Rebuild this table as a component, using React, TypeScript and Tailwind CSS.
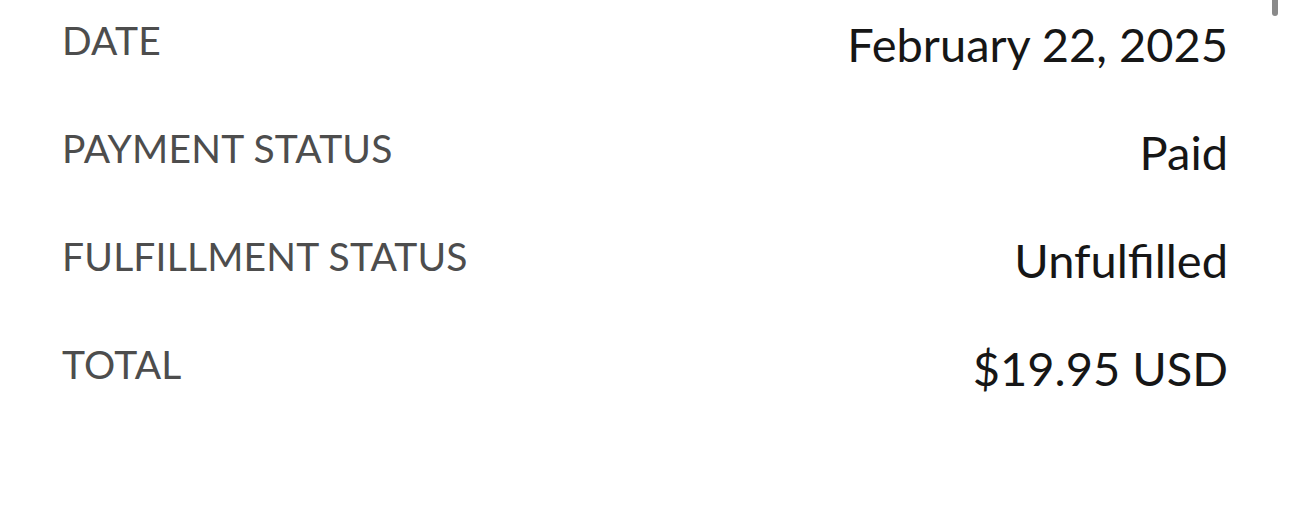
import React from 'react';

const rows = [
  { label: 'DATE', value: 'February 22, 2025' },
  { label: 'PAYMENT STATUS', value: 'Paid' },
  { label: 'FULFILLMENT STATUS', value: 'Unfulfilled' },
  { label: 'TOTAL', value: '$19.95 USD' },
];

export default function App() {
  return (
    <div className="relative w-[1290px] h-[529px] bg-white overflow-hidden font-['Lato','Noto_Sans',sans-serif]">
      {/* scrollbar thumb */}
      <div className="absolute right-[12px] top-0 w-[6px] h-[16px] rounded-b-full bg-[#8a8a8a]" />
      <div className="flex flex-col pl-[62px] pr-[62px] pt-[13px]">
        {rows.map(row => (
          <div key={row.label} className="flex justify-between items-start h-[108px]">
            <span className="text-[39px] leading-[55px] tracking-[0.2px] text-[#4d4d4d]">{row.label}</span>
            <span className="text-[47px] leading-[62px] text-[#161616]">{row.value}</span>
          </div>
        ))}
      </div>
    </div>
  );
}
